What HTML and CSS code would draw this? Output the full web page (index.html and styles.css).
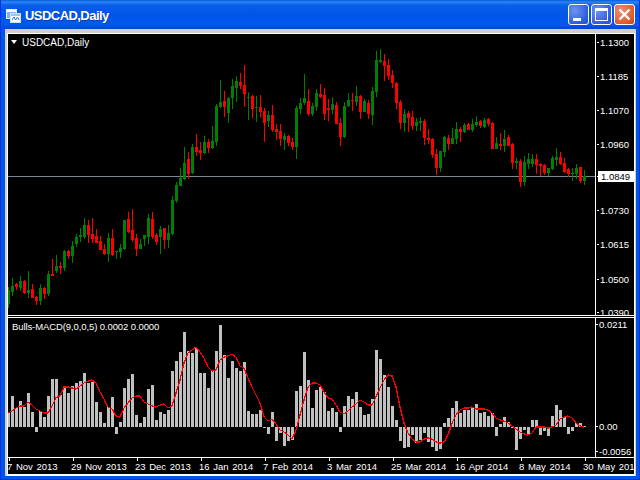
FILE: index.html
```html
<!DOCTYPE html>
<html lang="en">
<head>
    <meta charset="UTF-8">
    <title>USDCAD,Daily</title>
    <link rel="stylesheet" href="styles.css">
</head>
<body>
    <div class="window">
        <div class="titlebar">
            <svg class="app-icon" width="15" height="14" viewBox="0 0 15 14">
                <rect x="0.5" y="0.5" width="10" height="9" fill="#7fb4f0" stroke="#dfeeff"/>
                <rect x="1" y="1" width="9" height="2" fill="#fff"/>
                <rect x="4.5" y="4.5" width="10" height="9" fill="#fff" stroke="#cfe2fa"/>
                <rect x="5" y="5" width="9" height="2" fill="#9cc4f2"/>
                <path d="M6 11l2-3 1.5 3 2-3 1.5 3" fill="none" stroke="#3a78d8"/>
            </svg>
            <span class="title">USDCAD,Daily</span>
            <div class="buttons">
                <div class="btn"><span class="min-glyph"></span></div>
                <div class="btn"><span class="max-glyph"></span></div>
                <div class="btn close">
                    <svg width="13" height="13" viewBox="0 0 13 13">
                        <path d="M1.5 1.5l10 10M11.5 1.5l-10 10" stroke="#fff" stroke-width="2.4" fill="none"/>
                    </svg>
                </div>
            </div>
        </div>
        <div class="frame">
            <div class="chart">
                <div class="pane pane-main">
                    <div class="plot">
                        <svg id="mainPlot" width="587" height="281" viewBox="8 34 587 281" shape-rendering="crispEdges"></svg>
                        <span class="pane-label"><span class="arrow"></span>USDCAD,Daily</span>
                    </div>
                    <div class="scale" id="mainScale"></div>
                </div>
                <div class="pane-gap"></div>
                <div class="pane pane-sub">
                    <div class="plot">
                        <svg id="subPlot" width="587" height="139" viewBox="8 318 587 139" shape-rendering="crispEdges"></svg>
                        <span class="pane-label">Bulls-MACD(9,0,0,5) 0.0002 0.0000</span>
                    </div>
                    <div class="scale" id="subScale"></div>
                </div>
                <div class="timeline" id="timeline"></div>
            </div>
        </div>
    </div>
    <script src="chart.js"></script>
</body>
</html>
```

FILE: styles.css
```css
* {
    box-sizing: border-box;
}

body {
    margin: 0;
    width: 640px;
    height: 480px;
    overflow: hidden;
    font-family: "Liberation Sans", Arial, sans-serif;
}

.window {
    width: 640px;
    height: 480px;
    display: flex;
    flex-direction: column;
    background-color: #0055e5;
    padding: 0 3px 3px 4px;
    border-left: 1px solid #0831d9;
    border-right: 1px solid #0831d9;
    border-bottom: 1px solid #0831d9;
}

.titlebar {
    height: 29px;
    margin: 0 -3px 0 -4px;
    padding: 2px 4px 0 5px;
    display: flex;
    align-items: center;
    background: linear-gradient(to bottom, #0a58d8 0, #2a86f5 2px, #0a60ea 5px, #0055e5 14px, #0058ee 24px, #0048d0 29px);
}

.app-icon {
    margin-right: 4px;
}

.title {
    color: #fff;
    font-size: 13px;
    font-weight: bold;
    letter-spacing: -0.55px;
    text-shadow: 1px 1px 0 #0f3fa8;
}

.buttons {
    margin-left: auto;
    margin-top: -2px;
    display: flex;
    gap: 2px;
}

.btn {
    width: 21px;
    height: 21px;
    border: 1px solid #fff;
    border-radius: 3px;
    background: radial-gradient(circle at 30% 30%, #6f95ee, #2c5de0 70%, #2a50c8);
    display: flex;
    align-items: center;
    justify-content: center;
    position: relative;
}

.btn.close {
    background: radial-gradient(circle at 30% 30%, #ee9070, #df5a2c 70%, #c23f18);
}

.min-glyph {
    width: 8px;
    height: 3px;
    background-color: #fff;
    position: absolute;
    left: 4px;
    bottom: 3px;
}

.max-glyph {
    width: 13px;
    height: 13px;
    border: 1px solid #fff;
    border-top-width: 3px;
}

.frame {
    flex: 1;
    background-color: #d4d0c8;
    padding: 4px 1px 1px 2px;
    min-height: 0;
}

.chart {
    height: 443px;
    background-color: #000;
    border: 1px solid #fff;
    border-bottom-width: 2px;
    color: #fff;
    font-size: 9.5px;
    line-height: 11px;
}

.pane {
    display: flex;
}

.pane-main {
    height: 282px;
    border-bottom: 1px solid #fff;
}

.pane-gap {
    height: 2px;
    border-bottom: 1px solid #fff;
}

.pane-sub {
    height: 140px;
    border-bottom: 1px solid #fff;
}

.plot {
    width: 588px;
    border-right: 1px solid #fff;
    position: relative;
    flex: none;
}

.plot svg {
    display: block;
}

.pane-label {
    position: absolute;
    left: 4px;
    top: 3px;
    white-space: nowrap;
    letter-spacing: -0.1px;
}

.pane-main .pane-label {
    left: 3px;
    padding-left: 11px;
    font-size: 10px;
    letter-spacing: 0;
}

.arrow {
    position: absolute;
    left: 0;
    top: 3px;
    border-left: 3.5px solid transparent;
    border-right: 3.5px solid transparent;
    border-top: 4px solid #fff;
}

.scale {
    flex: 1;
    position: relative;
}

.tick {
    position: absolute;
    left: 4px;
    white-space: nowrap;
}

.tick::before {
    content: "";
    position: absolute;
    left: -3px;
    top: 5px;
    width: 2px;
    height: 1px;
    background-color: #fff;
}

.pane-sub .tick {
    left: 3px;
}

.tick.current {
    left: 2px;
    width: 37px;
    padding-left: 3px;
    background-color: #fff;
    color: #000;
}

.tick.current::before {
    left: -1px;
    background-color: #fff;
}

.timeline {
    position: relative;
    height: 17px;
    margin-left: -1px;
    overflow: hidden;
}

.date {
    position: absolute;
    top: 3px;
    white-space: nowrap;
    word-spacing: 1px;
}

.date::before {
    content: "";
    position: absolute;
    left: 2px;
    top: -3px;
    width: 1px;
    height: 3px;
    background-color: #fff;
}
```

FILE: chart.js
```js
const SVG_NS = 'http://www.w3.org/2000/svg';
const GREEN = '#008000';
const RED = '#ff0000';

// one row per bar: colour (g/r), high, body top, body bottom, low, in screen y
const candles = [
    'g 287 290 304 308', 'g 278 286 292 296', 'r 283 284 287 290', 'g 276 281 288 291',
    'r 280 281 293 294', 'g 271 290 293 298', 'r 284 289 298 298', 'r 296 297 301 305',
    'g 284 288 301 305', 'r 287 288 294 299', 'g 271 274 294 296', 'r 259 274 276 276',
    'g 255 266 271 273', 'r 262 266 268 274', 'g 250 251 268 271', 'r 250 251 256 259',
    'g 241 246 256 263', 'g 234 237 244 247', 'g 228 235 237 242', 'g 218 225 237 239',
    'r 220 225 235 243', 'r 218 234 239 243', 'r 229 236 243 243', 'r 236 241 250 250',
    'r 244 249 254 255', 'g 233 238 254 262', 'r 229 238 255 256', 'g 251 251 252 259',
    'g 244 248 252 258', 'g 220 220 249 250', 'r 212 219 232 233', 'r 209 230 240 242',
    'r 234 238 249 256', 'g 239 244 249 249', 'g 235 235 239 246', 'g 214 218 237 244',
    'r 212 219 237 239', 'r 233 235 242 245', 'g 226 229 237 254', 'r 228 228 240 249',
    'g 225 233 240 248', 'g 196 200 234 235', 'g 182 185 201 203', 'g 168 178 186 186',
    'g 147 163 179 180', 'r 152 159 174 179', 'g 144 147 173 174', 'r 134 147 152 156',
    'r 142 150 153 160', 'g 136 142 153 154', 'r 139 142 148 153', 'g 126 141 148 149',
    'g 104 106 142 146', 'g 80 102 107 108', 'r 91 101 107 117', 'g 97 98 113 123',
    'g 79 86 98 109', 'g 76 81 88 102', 'r 73 82 86 89', 'r 65 85 94 107',
    'g 92 97 98 120', 'r 95 96 109 118', 'g 96 107 108 122', 'r 95 107 112 117',
    'r 108 111 123 142', 'g 111 115 121 127', 'r 105 115 130 132', 'r 124 129 132 140',
    'r 124 131 139 146', 'g 133 136 140 150', 'r 135 136 143 146', 'r 138 142 147 150',
    'g 106 108 147 159', 'g 98 103 109 114', 'g 74 98 103 105', 'r 89 101 114 116',
    'g 103 106 114 116', 'g 89 93 107 111', 'r 84 94 97 98', 'r 88 95 114 120',
    'r 99 108 110 121', 'g 97 104 110 114', 'r 102 105 124 124', 'r 118 123 137 146',
    'g 102 106 137 138', 'g 93 100 106 107', 'r 93 100 101 111', 'g 86 96 102 106',
    'r 95 96 112 119', 'g 99 101 112 112', 'r 100 103 114 119', 'g 87 91 115 125',
    'g 51 60 92 97', 'g 49 60 62 63', 'r 54 61 66 81', 'r 59 65 76 80',
    'r 70 75 83 88', 'r 82 83 103 109', 'r 100 102 123 129', 'g 109 114 123 132',
    'r 111 113 118 132', 'r 111 117 126 130', 'g 118 122 126 131', 'g 117 121 123 131',
    'r 119 121 138 145', 'r 129 138 140 144', 'r 138 139 155 158', 'r 149 154 168 175',
    'g 151 151 168 172', 'g 136 137 152 157', 'r 135 138 144 150', 'g 128 138 144 144',
    'g 122 129 139 144', 'r 127 129 132 142', 'g 123 125 132 133', 'r 123 124 130 130',
    'g 119 124 130 132', 'g 116 122 125 127', 'r 120 121 126 128', 'g 118 120 127 128',
    'r 118 119 124 126', 'r 122 123 149 149', 'g 137 143 149 149', 'r 133 144 146 150',
    'g 130 139 146 152', 'r 135 137 146 146', 'r 143 144 163 169', 'g 158 161 163 169',
    'r 159 161 182 187', 'g 156 162 182 186', 'g 153 159 164 169', 'g 154 159 164 167',
    'r 154 159 165 174', 'r 163 164 166 176', 'r 164 165 173 175', 'g 168 168 173 176',
    'g 156 158 169 170', 'g 148 157 160 166', 'r 152 157 164 165', 'r 158 163 172 173',
    'r 168 169 174 177', 'g 168 173 174 181', 'g 164 168 174 179', 'r 167 167 181 183',
    'g 170 176 181 185'
];

const histogram = [
    413, 396, 408, 401, 407, 393, 412, 432, 411, 417, 396, 379, 379, 395, 386, 393, 386, 383, 381, 373,
    383, 382, 402, 412, 423, 407, 397, 434, 422, 388, 379, 374, 415, 423, 417, 389, 385, 420, 412, 414,
    410, 371, 361, 352, 332, 351, 353, 348, 373, 373, 388, 370, 351, 325, 355, 378, 361, 368, 371, 362,
    411, 414, 414, 410, 428, 434, 412, 441, 433, 446, 441, 440, 391, 386, 352, 380, 408, 390, 387, 392,
    411, 408, 412, 432, 406, 396, 399, 392, 407, 415, 414, 399, 350, 359, 375, 387, 406, 420, 441, 448,
    447, 435, 443, 440, 433, 442, 447, 451, 449, 423, 418, 408, 401, 413, 410, 410, 407, 404, 413, 412,
    416, 413, 436, 424, 417, 422, 428, 450, 439, 430, 435, 420, 420, 435, 431, 436, 416, 405, 410, 417,
    434, 431, 423, 423, 426
];

const signal = [
    413, 411, 408, 406, 406, 402, 405, 409, 411, 413, 413, 406, 398, 396, 387, 387, 388, 389, 386, 383,
    381, 380, 383, 392, 399, 407, 409, 416, 417, 408, 403, 398, 396, 396, 402, 404, 406, 407, 405, 404,
    408, 406, 393, 380, 363, 353, 350, 347, 352, 358, 367, 371, 370, 360, 357, 356, 354, 357, 366, 368,
    378, 387, 395, 403, 417, 421, 419, 424, 430, 432, 435, 439, 430, 415, 400, 387, 383, 383, 385, 392,
    398, 399, 405, 412, 414, 411, 407, 404, 400, 402, 405, 405, 397, 388, 380, 375, 376, 387, 407, 423,
    433, 439, 442, 442, 439, 438, 439, 442, 443, 442, 435, 423, 415, 410, 408, 408, 407, 409, 409, 409,
    410, 413, 418, 420, 421, 423, 426, 429, 432, 434, 435, 433, 427, 427, 427, 428, 427, 425, 419, 417,
    416, 418, 423, 426, 427
];

const mainTicks = [
    ['1.1300', 42], ['1.1185', 76], ['1.1070', 110], ['1.0960', 144], ['1.0730', 210],
    ['1.0615', 244], ['1.0500', 279], ['1.0390', 312]
];
const subTicks = [['0.0211', 324], ['0.00', 426], ['-0.0056', 451]];
const dates = [
    '7 Nov 2013', '29 Nov 2013', '23 Dec 2013', '16 Jan 2014', '7 Feb 2014',
    '3 Mar 2014', '25 Mar 2014', '16 Apr 2014', '8 May 2014', '30 May 2014'
];

function barX(i) {
    return 8 + i * 4;
}

function addShape(parent, name, attrs) {
    const el = document.createElementNS(SVG_NS, name);
    for (let key in attrs) {
        el.setAttribute(key, attrs[key]);
    }
    parent.appendChild(el);
    return el;
}

function drawMain() {
    const svg = document.getElementById('mainPlot');

    addShape(svg, 'rect', { x: 8, y: 176, width: 587, height: 1, fill: '#778899' });

    candles.forEach((row, i) => {
        const parts = row.split(' ');
        const color = parts[0] === 'g' ? GREEN : RED;
        const [high, top, bottom, low] = parts.slice(1).map(Number);
        const x = barX(i);
        addShape(svg, 'rect', { x: x, y: high, width: 1, height: low - high, fill: color });
        addShape(svg, 'rect', { x: x - 1, y: top, width: 3, height: Math.max(bottom - top, 1), fill: color });
    });
}

function drawSub() {
    const svg = document.getElementById('subPlot');

    histogram.forEach((top, i) => {
        const y = Math.min(top, 427);
        const height = Math.max(Math.abs(427 - top), 1);
        addShape(svg, 'rect', { x: barX(i) - 1, y: y, width: 3, height: height, fill: '#c0c0c0' });
    });

    const points = signal.map((y, i) => barX(i) + ',' + y).join(' ');
    addShape(svg, 'polyline', { points: points, fill: 'none', stroke: RED, 'stroke-width': 1.3 });
}

function addTick(scale, text, y, offset, extraClass) {
    const tick = document.createElement('span');
    tick.className = 'tick' + (extraClass ? ' ' + extraClass : '');
    tick.textContent = text;
    tick.style.top = (y - offset - 5) + 'px';
    scale.appendChild(tick);
}

function drawScales() {
    const mainScale = document.getElementById('mainScale');
    mainTicks.forEach(t => addTick(mainScale, t[0], t[1], 34));
    addTick(mainScale, '1.0849', 176, 34, 'current');

    const subScale = document.getElementById('subScale');
    subTicks.forEach(t => addTick(subScale, t[0], t[1], 318));

    const timeline = document.getElementById('timeline');
    dates.forEach((text, i) => {
        const date = document.createElement('span');
        date.className = 'date';
        date.textContent = text;
        date.style.left = (i * 64) + 'px';
        timeline.appendChild(date);
    });
}

drawMain();
drawSub();
drawScales();
```
